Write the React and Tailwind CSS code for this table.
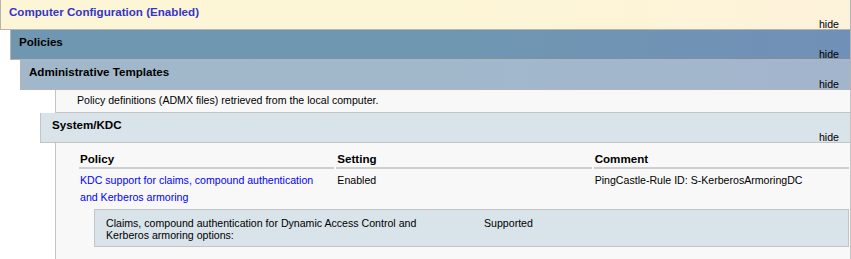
import React from 'react'

const font = "font-['Tahoma','Liberation_Sans',Arial,sans-serif]"

// collapsible section header, title on top and the "hide" toggle at bottom right
const SectionBar = ({ title, className, titleClass = 'text-black', padLeft = 'pl-2' }) => {
  return (
    <div className={`border border-t-0 border-[#b4b4b4] ${className}`}>
      <div className={`${padLeft} pt-[5px] text-[11.6px] leading-[14px] font-bold ${titleClass}`}>{title}</div>
      <div className="pr-[11px] text-right text-[10.6px] leading-[10px] text-black">
        <span className="cursor-pointer">hide</span>
      </div>
    </div>
  )
}

const App = () => {
  return (
    <div className={`w-[851px] h-[259px] overflow-hidden bg-white ${font}`}>
      <SectionBar
        title="Computer Configuration (Enabled)"
        className="bg-linear-to-r from-[#fdf6d6] via-[#fdf6d6] to-[#fdf2da]"
        titleClass="text-[#3434cc]"
      />

      <div className="ml-[10px]">
        <SectionBar
          title="Policies"
          className="bg-linear-to-r from-[#6f97b1] via-[#6f97b1] to-[#7190b7]"
        />

        <div className="ml-[10px]">
          <SectionBar
            title="Administrative Templates"
            className="bg-linear-to-r from-[#a1b8cb] via-[#a1b8cb] to-[#a3b5cd]"
          />

          <div className="ml-[35px] border-l border-r border-b border-[#c4c4c4] bg-[#f8f8f8] pl-[21px] pt-[3px] pb-[4px] text-[10.6px] leading-[15px] text-black">
            Policy definitions (ADMX files) retrieved from the local computer.
          </div>

          <div className="ml-[20px]">
            <SectionBar
              title="System/KDC"
              className="bg-[#d9e3ea] border-[#c4c4c4]"
              padLeft="pl-[11px]"
            />

            <div className="ml-[15px] h-[200px] border-l border-r border-[#c4c4c4] bg-[#f8f8f8] pl-[23px] pr-[1px] pt-[9px] text-[10.6px] text-black">
              <div className="grid grid-cols-3 gap-x-[2px]">
                <div className="border-b-2 border-[#cfcfcf] pl-[1px] pb-[1px] text-[11.6px] font-bold leading-[14px]">Policy</div>
                <div className="border-b-2 border-[#cfcfcf] pl-[1px] pb-[1px] text-[11.6px] font-bold leading-[14px]">Setting</div>
                <div className="border-b-2 border-[#cfcfcf] pl-[1px] pb-[1px] text-[11.6px] font-bold leading-[14px]">Comment</div>

                <div className="pl-[1px] pr-[20px] pt-[3px] leading-[17px] text-[#0000ff]">
                  KDC support for claims, compound authentication and Kerberos armoring
                </div>
                <div className="pl-[1px] pt-[3px] leading-[17px]">Enabled</div>
                <div className="pl-[1px] pt-[3px] leading-[17px]">PingCastle-Rule ID: S-KerberosArmoringDC</div>
              </div>

              <div className="ml-[15px] mt-[3px] flex border border-[#c4c4c4] bg-[#d9e3ea] pl-[11px] pt-[7px] pb-[5px] leading-[12px]">
                <div className="w-[378px] pr-[50px]">
                  Claims, compound authentication for Dynamic Access Control and Kerberos armoring options:
                </div>
                <div>Supported</div>
              </div>
            </div>
          </div>
        </div>
      </div>
    </div>
  )
}

export default App
